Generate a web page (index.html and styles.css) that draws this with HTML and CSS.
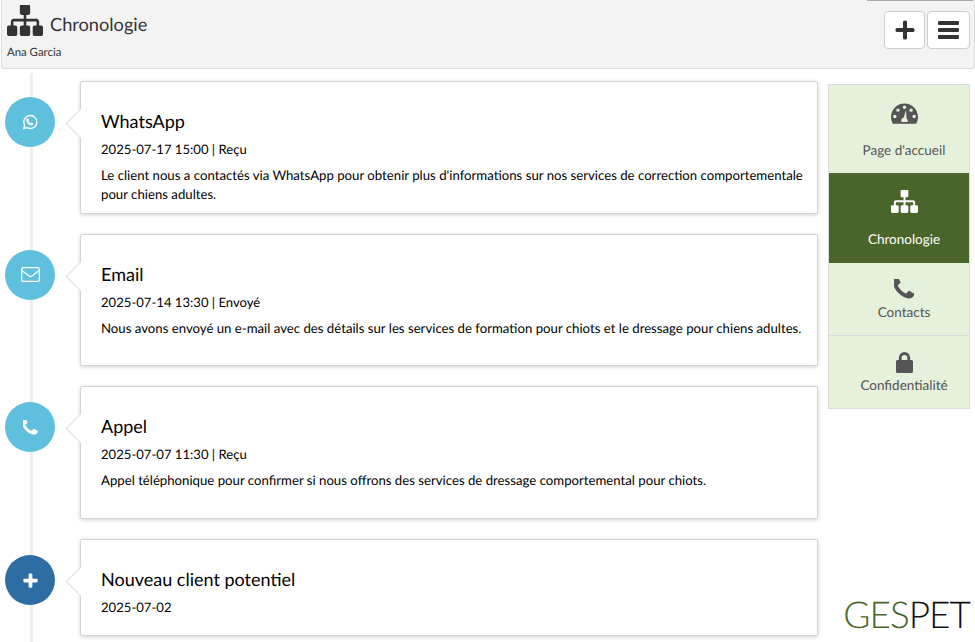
FILE: index.html
```html
<!DOCTYPE html>
<html lang="fr">
<head>
    <meta charset="UTF-8">
    <title>Chronologie</title>
    <link rel="stylesheet" href="styles.css">
</head>
<body>
    <svg class="defs" width="0" height="0">
        <symbol id="i-sitemap" viewBox="0 160 1792 1504" preserveAspectRatio="none">
            <path d="M1792 1248v320q0 40-28 68t-68 28h-320q-40 0-68-28t-28-68v-320q0-40 28-68t68-28h96v-192h-512v192h96q40 0 68 28t28 68v320q0 40-28 68t-68 28h-320q-40 0-68-28t-28-68v-320q0-40 28-68t68-28h96v-192h-512v192h96q40 0 68 28t28 68v320q0 40-28 68t-68 28h-320q-40 0-68-28t-28-68v-320q0-40 28-68t68-28h96v-192q0-52 38-90t90-38h512v-192h-96q-40 0-68-28t-28-68v-320q0-40 28-68t68-28h320q40 0 68 28t28 68v320q0 40-28 68t-68 28h-96v192h512q52 0 90 38t38 90v192h96q40 0 68 28t28 68z"/>
        </symbol>
        <symbol id="i-phone" viewBox="300 250 1320 1320">
            <path d="M1600 1240q0 27-10 70.500t-21 68.500q-21 50-122 106-94 51-186 51-27 0-53-3.500t-57.500-12.500-47-14.500-55.500-20.500-49-18q-98-35-175-83-127-79-264-216t-216-264q-48-77-83-175-3-9-18-49t-20.500-55.500-14.500-47-12.500-57.500-3.500-53q0-92 51-186 56-101 106-122 25-11 68.500-21t70.500-10q14 0 21 3 18 6 53 76 11 19 30 54t35 63.500 31 53.500q3 4 17.500 25t21.500 35.500 7 28.500q0 20-28.500 50t-62 55-62 53-28.500 46q0 9 5 22.500t8.500 20.500 14 24 11.500 19q76 137 174 235t235 174q2 1 19 11.500t24 14 20.500 8.500 22.500 5q18 0 46-28.500t53-62 55-62 50-28.500q14 0 28.500 7t35.500 21.500 25 17.500q25 15 53.500 31t63.500 35 54 30q70 35 76 53 3 7 3 21z"/>
        </symbol>
    </svg>

    <header class="topbar">
        <div class="topbar-info">
            <h1 class="topbar-title">
                <svg class="topbar-icon"><use href="#i-sitemap"/></svg>
                Chronologie
            </h1>
            <p class="topbar-name">Ana Garcia</p>
        </div>
        <div class="topbar-actions">
            <button class="icon-btn btn-add">
                <svg width="20" height="20" viewBox="0 0 20 20"><path d="M8 2a1.500 1.500 0 0 1 1.500-1.500h1A1.500 1.500 0 0 1 12 2v6h6a1.500 1.500 0 0 1 1.500 1.500v1A1.500 1.500 0 0 1 18 12h-6v6a1.500 1.500 0 0 1-1.500 1.500h-1A1.500 1.500 0 0 1 8 18v-6H2a1.500 1.500 0 0 1-1.500-1.500v-1A1.500 1.500 0 0 1 2 8h6z"/></svg>
            </button>
            <button class="icon-btn btn-menu">
                <svg width="21" height="18" viewBox="0 0 21 18"><path d="M1 0h19a1 1 0 0 1 1 1v2a1 1 0 0 1-1 1H1a1 1 0 0 1-1-1V1a1 1 0 0 1 1-1zM1 7h19a1 1 0 0 1 1 1v2a1 1 0 0 1-1 1H1a1 1 0 0 1-1-1V8a1 1 0 0 1 1-1zM1 14h19a1 1 0 0 1 1 1v2a1 1 0 0 1-1 1H1a1 1 0 0 1-1-1v-2a1 1 0 0 1 1-1z"/></svg>
            </button>
        </div>
    </header>

    <main class="content">
        <section class="timeline">
            <article class="entry">
                <div class="badge badge-info">
                    <svg width="16" height="16" viewBox="0 0 18 18" fill="none" stroke="currentColor" stroke-width="1.500"><path d="M2 16.300l1-3.700a7.300 7.300 0 1 1 2.700 2.700z"/><path fill="currentColor" stroke="none" d="M6.500 4.900c.4 0 .6.100.8.500l.6 1.300c.1.300 0 .6-.2.800l-.5.600c.6 1.100 1.500 1.900 2.700 2.500l.6-.7c.2-.2.400-.3.700-.2l1.300.6c.3.200.4.400.4.700 0 1.100-1 1.800-2 1.800-2.800-.2-6-3.100-6.100-5.900 0-1 .7-2 1.700-2z"/></svg>
                </div>
                <div class="card">
                    <h2 class="card-title">WhatsApp</h2>
                    <p class="card-meta">2025-07-17 15:00 | Reçu</p>
                    <p class="card-text">Le client nous a contactés via WhatsApp pour obtenir plus d'informations sur nos services de correction comportementale pour chiens adultes.</p>
                </div>
            </article>
            <article class="entry">
                <div class="badge badge-info">
                    <svg width="19" height="15" viewBox="0 0 19 15" fill="none" stroke="currentColor" stroke-width="1.300"><rect x=".7" y=".7" width="17.600" height="13.600" rx="1.500"/><path d="M1 3.500l7 5.500c.9.700 2.100.7 3 0l7-5.500"/></svg>
                </div>
                <div class="card">
                    <h2 class="card-title">Email</h2>
                    <p class="card-meta">2025-07-14 13:30 | Envoyé</p>
                    <p class="card-text">Nous avons envoyé un e-mail avec des détails sur les services de formation pour chiots et le dressage pour chiens adultes.</p>
                </div>
            </article>
            <article class="entry">
                <div class="badge badge-info">
                    <svg width="15" height="15"><use href="#i-phone"/></svg>
                </div>
                <div class="card">
                    <h2 class="card-title">Appel</h2>
                    <p class="card-meta">2025-07-07 11:30 | Reçu</p>
                    <p class="card-text">Appel téléphonique pour confirmer si nous offrons des services de dressage comportemental pour chiots.</p>
                </div>
            </article>
            <article class="entry">
                <div class="badge badge-primary">
                    <svg width="15" height="15" viewBox="0 0 20 20"><path d="M7.500 2a1.500 1.500 0 0 1 1.500-1.500h2A1.500 1.500 0 0 1 12.500 2v5.500H18A1.500 1.500 0 0 1 19.500 9v2a1.500 1.500 0 0 1-1.500 1.500h-5.500V18a1.500 1.500 0 0 1-1.500 1.500H9A1.500 1.500 0 0 1 7.500 18v-5.500H2A1.500 1.500 0 0 1 .5 11V9A1.500 1.500 0 0 1 2 7.500h5.500z"/></svg>
                </div>
                <div class="card card-short">
                    <h2 class="card-title">Nouveau client potentiel</h2>
                    <p class="card-meta">2025-07-02</p>
                </div>
            </article>
        </section>

        <aside class="side">
            <nav class="side-nav">
                <a class="side-link side-link-home">
                    <svg width="27" height="21" viewBox="0 0 28 21"><path fill-rule="evenodd" d="M14 0C6.300 0 0 6.300 0 14c0 2.600.7 5 2 7h24c1.300-2 2-4.400 2-7C28 6.300 21.700 0 14 0zM14 2.300a1.800 1.800 0 1 1 0 3.600 1.800 1.800 0 0 1 0-3.600zM7.200 5.200a1.800 1.800 0 1 1 0 3.600 1.800 1.800 0 0 1 0-3.600zm13.600 0a1.800 1.800 0 1 1 0 3.600 1.800 1.800 0 0 1 0-3.600zM4 11.800a1.800 1.800 0 1 1 0 3.600 1.800 1.800 0 0 1 0-3.600zm20 0a1.800 1.800 0 1 1 0 3.600 1.800 1.800 0 0 1 0-3.600zM15.700 6.800l.4 8.900c.8.500 1.300 1.300 1.300 2.300a3.300 3.300 0 0 1-.3 1.300h-6.200a3.300 3.300 0 0 1-.3-1.300c0-1.500 1.100-2.700 2.500-3z"/></svg>
                    <span>Page d'accueil</span>
                </a>
                <a class="side-link side-link-active">
                    <svg width="27" height="23"><use href="#i-sitemap"/></svg>
                    <span>Chronologie</span>
                </a>
                <a class="side-link">
                    <svg width="21" height="20" preserveAspectRatio="none"><use href="#i-phone"/></svg>
                    <span>Contacts</span>
                </a>
                <a class="side-link side-link-lock">
                    <svg width="17" height="21" viewBox="0 0 18 21" preserveAspectRatio="none"><path fill-rule="evenodd" d="M3 8V6a6 6 0 0 1 12 0v2h1.500A1.500 1.500 0 0 1 18 9.500v10a1.500 1.500 0 0 1-1.500 1.500h-15A1.500 1.500 0 0 1 0 19.500v-10A1.500 1.500 0 0 1 1.500 8zm3 0h6V6a3 3 0 0 0-6 0z"/></svg>
                    <span>Confidentialité</span>
                </a>
            </nav>
            <div class="logo"><span class="logo-green">GES</span>PET</div>
        </aside>
    </main>
</body>
</html>
```

FILE: styles.css
```css
* {
    margin: 0;
    padding: 0;
    box-sizing: border-box;
}

body {
    font-family: "Lato", "Liberation Sans", sans-serif;
    font-size: 13px;
    color: #000;
    background-color: #fff;
    height: 100vh;
    overflow: hidden;
    text-rendering: geometricPrecision;
}

.defs {
    display: block;
    height: 0;
}

/* Barre du haut */
.topbar {
    position: relative;
    height: 69px;
    margin-left: 1px;
    padding: 0 4px 0 5px;
    background-color: #f3f3f3;
    border: 1px solid #ddd;
    border-top: none;
    border-radius: 0 0 3px 3px;
    display: flex;
    justify-content: space-between;
}

.topbar::after {
    content: "";
    position: absolute;
    top: 0;
    right: 1px;
    width: 106px;
    height: 1px;
    background-color: #aaa;
}

.topbar-title {
    display: flex;
    align-items: center;
    gap: 7px;
    height: 44px;
    padding-top: 3px;
    font-size: 18.200px;
    font-weight: 400;
    color: #333;
}

.topbar-icon {
    width: 36px;
    height: 31px;
    fill: #333;
    margin-top: -7px;
}

.topbar-name {
    margin-top: 2px;
    font-size: 11.400px;
    color: #333;
}

.topbar-actions {
    display: flex;
    gap: 2px;
    padding-top: 11px;
}

.icon-btn {
    height: 38px;
    background-color: #fff;
    border: 1px solid #ccc;
    border-radius: 4px;
    display: flex;
    align-items: center;
    justify-content: center;
}

.icon-btn svg {
    fill: #333;
}

.btn-add {
    width: 41px;
}

.btn-menu {
    width: 43px;
}

/* Contenu */
.content {
    display: flex;
    height: calc(100vh - 69px);
    padding-right: 5px;
}

.timeline {
    position: relative;
    flex: 1;
    padding: 12px 0 0 5px;
}

.timeline::before {
    content: "";
    position: absolute;
    left: 30px;
    top: 4px;
    bottom: 0;
    width: 3px;
    background-color: #eee;
}

.entry {
    position: relative;
    display: flex;
    gap: 25px;
    margin-bottom: 20px;
}

.badge {
    flex: none;
    width: 50px;
    height: 50px;
    margin-top: 16px;
    border-radius: 50%;
    color: #fff;
    fill: #fff;
    display: flex;
    align-items: center;
    justify-content: center;
}

.badge-info {
    background-color: #5fc0de;
}

.badge-primary {
    background-color: #2e6da4;
}

.card {
    position: relative;
    flex: 1;
    height: 132.700px;
    padding: 28px 10px 0 20px;
    background-color: #fff;
    border: 1px solid #d4d4d4;
    border-radius: 2px;
    box-shadow: 0 1px 4px rgba(0, 0, 0, 0.18);
}

.card-short {
    height: 97px;
}

.card::before {
    content: "";
    position: absolute;
    left: -11px;
    top: 31px;
    width: 20px;
    height: 20px;
    background-color: #fff;
    border-left: 1px solid #ddd;
    border-bottom: 1px solid #ddd;
    transform: rotate(45deg);
}

.card-title {
    font-size: 18px;
    font-weight: 400;
    line-height: 22px;
}

.card-meta {
    margin-top: 8px;
    font-size: 13.100px;
    line-height: 19px;
}

.card-text {
    margin-top: 7px;
    font-size: 13.200px;
    line-height: 19px;
}

/* Menu lateral */
.side {
    flex: none;
    width: 142px;
    margin-left: 10px;
    padding-top: 15px;
    display: flex;
    flex-direction: column;
}

.side-nav {
    background-color: #e5f1db;
    border: 1px solid #ddd;
}

.side-link {
    height: 73px;
    padding: 16px 0 0 10px;
    color: #555;
    fill: #555;
    font-size: 13.500px;
    line-height: 16px;
    display: flex;
    flex-direction: column;
    align-items: center;
    gap: 5px;
    border-bottom: 1px solid #ddd;
}

.side-link-home {
    height: 88px;
    padding-top: 18px;
    gap: 18px;
    border-bottom: none;
}

.side-link-active {
    height: 90px;
    padding-top: 17px;
    gap: 18px;
    border-bottom: none;
    background-color: #4a652a;
    color: #fff;
    fill: #fff;
}

.side-link-lock {
    height: 72px;
    gap: 4px;
    border-bottom: none;
}

.logo {
    margin-top: auto;
    margin-bottom: 8px;
    text-align: right;
    font-size: 37px;
    font-weight: 300;
    line-height: 40px;
    letter-spacing: -1px;
    color: #111;
}

.logo-green {
    color: #4a652a;
}
```
